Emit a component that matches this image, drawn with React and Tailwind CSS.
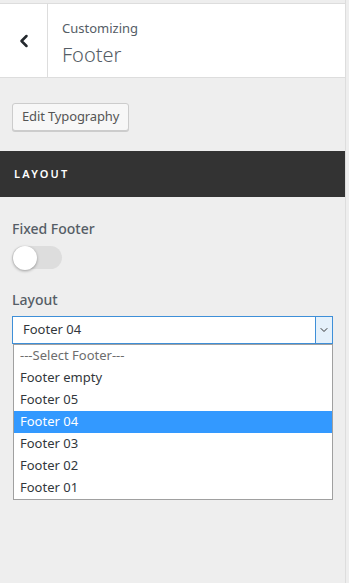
import { ChevronLeft, ChevronDown } from 'lucide-react';

const options = ['Footer empty', 'Footer 05', 'Footer 04', 'Footer 03', 'Footer 02', 'Footer 01'];

export default function App() {
    const selected = 'Footer 04';

    return (
        <div className="w-[349px] h-[583px] bg-[#eeeeee] font-['Noto_Sans',sans-serif] overflow-hidden">
            <div className="w-[346px] h-full border-r border-[#dddddd]">
                {/* header */}
                <div className="pt-[3px]">
                    <div className="flex h-[75px] bg-white border-y border-[#dddddd]">
                        <div className="w-[48px] flex items-center justify-center border-r border-[#dddddd]">
                            <ChevronLeft size={20} strokeWidth={3} className="text-[#23282d]" />
                        </div>
                        <div className="pl-[14px] pt-[15px]">
                            <div className="text-[13px] leading-[18px] text-[#555d66]">Customizing</div>
                            <div className="text-[20px] leading-[28px] font-light text-[#555d66] mt-[4px]">Footer</div>
                        </div>
                    </div>
                </div>

                <div className="px-[12px] pt-[25px] pb-[20px]">
                    <button className="h-[28px] px-[9px] text-[13px] tracking-[-0.01em] text-[#555555] bg-[#f7f7f7] border border-[#cccccc] rounded-[3px] shadow-[0_1px_0_#cccccc]">
                        Edit Typography
                    </button>
                </div>

                <div className="h-[46px] bg-[#333333] flex items-center px-[14px]">
                    <span className="text-[11px] font-semibold tracking-[0.2em] text-white">LAYOUT</span>
                </div>

                <div className="px-[12px] pt-[22px]">
                    <div className="text-[14px] font-medium text-[#555d66] leading-[20px]">Fixed Footer</div>
                    <div className="mt-[7px] relative w-[50px] h-[23px] rounded-full bg-[#dddddd]">
                        <div className="absolute left-[1px] top-0 w-[24px] h-[24px] rounded-full bg-white shadow-[0_1px_3px_rgba(0,0,0,0.35)]" />
                    </div>

                    <div className="mt-[21px] text-[14px] font-medium text-[#555d66] leading-[20px]">Layout</div>
                    <div className="mt-[6px] w-[321px]">
                        <div className="flex h-[28px] bg-white border border-[#3e8fd8]">
                            <div className="flex-1 flex items-center pl-[10px] text-[13px] text-[#32373c]">{selected}</div>
                            <div className="w-[17px] flex items-center justify-center bg-[#e5f1fb] border-l border-[#3e8fd8]">
                                <ChevronDown size={12} strokeWidth={2} className="text-[#333333]" />
                            </div>
                        </div>
                        <div className="ml-[1px] bg-white border border-[#a0a0a0]">
                            <div className="h-[22px] flex items-center pl-[6px] text-[13px] text-[#6d6d6d]">---Select Footer---</div>
                            {options.map((opt) => (
                                <div
                                    key={opt}
                                    className={
                                        opt === selected
                                            ? 'h-[22px] flex items-center pl-[6px] text-[13px] bg-[#3399ff] text-white'
                                            : 'h-[22px] flex items-center pl-[6px] text-[13px] text-[#32373c]'
                                    }
                                >
                                    {opt}
                                </div>
                            ))}
                        </div>
                    </div>
                </div>
            </div>
        </div>
    );
}
